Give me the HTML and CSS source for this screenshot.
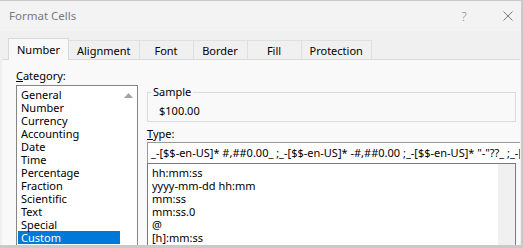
FILE: index.html
```html
<!DOCTYPE html>
<html>
<head>
<meta charset="utf-8">
<title>Format Cells</title>
<link rel="stylesheet" href="styles.css">
</head>
<body>
<div class="window">
  <div class="titlebar">
    <span class="title">Format Cells</span>
    <span class="help">?</span>
    <svg class="close" width="10" height="10" viewBox="0 0 10 10"><path d="M0.5 0.5 L9.5 9.5 M9.5 0.5 L0.5 9.5" stroke="#7a7a7a" stroke-width="1" fill="none"/></svg>
  </div>
  <div class="tabs">
    <div class="tab selected">Number</div>
    <div class="tab">Alignment</div>
    <div class="tab">Font</div>
    <div class="tab">Border</div>
    <div class="tab">Fill</div>
    <div class="tab">Protection</div>
  </div>
  <div class="panel">
    <div class="col-left">
      <div class="label"><u>C</u>ategory:</div>
      <div class="listbox">
        <div class="items">
          <div class="item">General</div>
          <div class="item">Number</div>
          <div class="item">Currency</div>
          <div class="item">Accounting</div>
          <div class="item">Date</div>
          <div class="item">Time</div>
          <div class="item">Percentage</div>
          <div class="item">Fraction</div>
          <div class="item">Scientific</div>
          <div class="item">Text</div>
          <div class="item">Special</div>
          <div class="item active">Custom</div>
        </div>
        <div class="vscroll white">
          <svg class="arrow" width="9" height="5" viewBox="0 0 9 5"><path d="M4.5 0 L9 5 L0 5 Z" fill="#a3a3a3"/></svg>
        </div>
      </div>
    </div>
    <div class="col-right">
      <fieldset class="sample">
        <legend>Sample</legend>
        <div class="sample-value">$100.00</div>
      </fieldset>
      <div class="label type-label"><u>T</u>ype:</div>
      <div class="type-input">_-[$$-en-US]* #,##0.00_ ;_-[$$-en-US]* -#,##0.00 ;_-[$$-en-US]* "-"??_ ;_-[$$-en-US]* @_ </div>
      <div class="typelist">
        <div class="items">
          <div class="item">hh:mm:ss</div>
          <div class="item">yyyy-mm-dd hh:mm</div>
          <div class="item">mm:ss</div>
          <div class="item">mm:ss.0</div>
          <div class="item">@</div>
          <div class="item">[h]:mm:ss</div>
        </div>
        <div class="vscroll grey"></div>
      </div>
    </div>
  </div>
</div>
</body>
</html>
```
FILE: styles.css
```css
html, body {
  margin: 0;
  padding: 0;
}
body {
  background: #c9c9c9;
  width: 523px;
  height: 248px;
  overflow: hidden;
  font-family: "Noto Sans", "Open Sans", sans-serif;
  font-size: 11px;
  color: #000;
}
.window {
  margin-top: 1px;
  width: 521px;
  height: 244px;
  background: #f0f0f0;
  overflow: hidden;
  display: flex;
  flex-direction: column;
}
.titlebar {
  height: 30px;
  flex: none;
  background: #f3f3f3;
  display: flex;
  align-items: center;
  padding-left: 9px;
  padding-right: 8px;
}
.title {
  flex: 1;
  color: #7a7a7a;
  font-size: 11.5px;
  line-height: 14px;
}
.help {
  width: 12px;
  text-align: center;
  color: #8a8a8a;
  font-size: 13px;
  font-weight: 300;
  line-height: 14px;
  margin-right: 33px;
}
.close {
  display: block;
  flex: none;
}
.tabs {
  height: 28px;
  flex: none;
  display: flex;
  align-items: flex-end;
  padding-left: 8px;
  position: relative;
  z-index: 1;
}
.tab {
  min-width: 54px;
  box-sizing: border-box;
  padding: 3px 8px 1px;
  line-height: 14px;
  text-align: center;
  border: 1px solid #e0e0e0;
  border-bottom: none;
  border-left: none;
  background: #f0f0f0;
}
.tab.selected {
  padding: 4px 8px 3px;
  margin-bottom: -1px;
  border-left: 1px solid #d9d9d9;
  border-top-color: #d9d9d9;
  border-right-color: #d9d9d9;
  background: #f9f9f9;
}
.panel {
  flex: 1;
  min-height: 0;
  margin-left: 2px;
  margin-right: 1px;
  background: #f9f9f9;
  border-top: 1px solid #d9d9d9;
  display: flex;
  gap: 9px;
  padding: 9px 4px 0 14px;
  overflow: hidden;
}
.label {
  line-height: 14px;
  height: 14px;
}
.col-left {
  width: 122px;
  flex: none;
}
.listbox {
  margin-top: 2px;
  height: 200px;
  box-sizing: border-box;
  border: 1px solid #868686;
  background: #fff;
  display: flex;
}
.items {
  flex: 1;
  min-width: 0;
  padding-top: 2px;
}
.listbox .items {
  padding-left: 1px;
}
.item {
  line-height: 13px;
  height: 13px;
  padding-left: 3px;
  white-space: nowrap;
}
.item.active {
  background: #0078d7;
  color: #fff;
}
.vscroll {
  width: 17px;
  flex: none;
}
.vscroll.white {
  background: #fff;
  display: flex;
  justify-content: center;
  padding-top: 7px;
  box-sizing: border-box;
}
.vscroll.grey {
  background: #f0f0f0;
}
.arrow {
  display: block;
}
.col-right {
  width: 369px;
  flex: none;
}
.sample {
  margin: 16px 0 0;
  padding: 5px 11px 3px;
  border: 1px solid #dcdcdc;
  min-width: 0;
}
.sample legend {
  padding: 0 2px;
  margin-left: -8px;
  line-height: 14px;
}
.sample-value {
  line-height: 14px;
}
.type-label {
  margin-top: 5px;
}
.type-input {
  margin-top: 1px;
  margin-right: -12px;
  height: 20px;
  line-height: 20px;
  border-top: 1px solid #9a9a9a;
  border-left: 1px solid #9a9a9a;
  background: #fff;
  padding-left: 3px;
  white-space: nowrap;
  overflow: hidden;
}
.typelist {
  height: 200px;
  box-sizing: border-box;
  border: 1px solid #7a7a7a;
  background: #fff;
  display: flex;
}
.typelist .item {
  padding-left: 4px;
}
```
